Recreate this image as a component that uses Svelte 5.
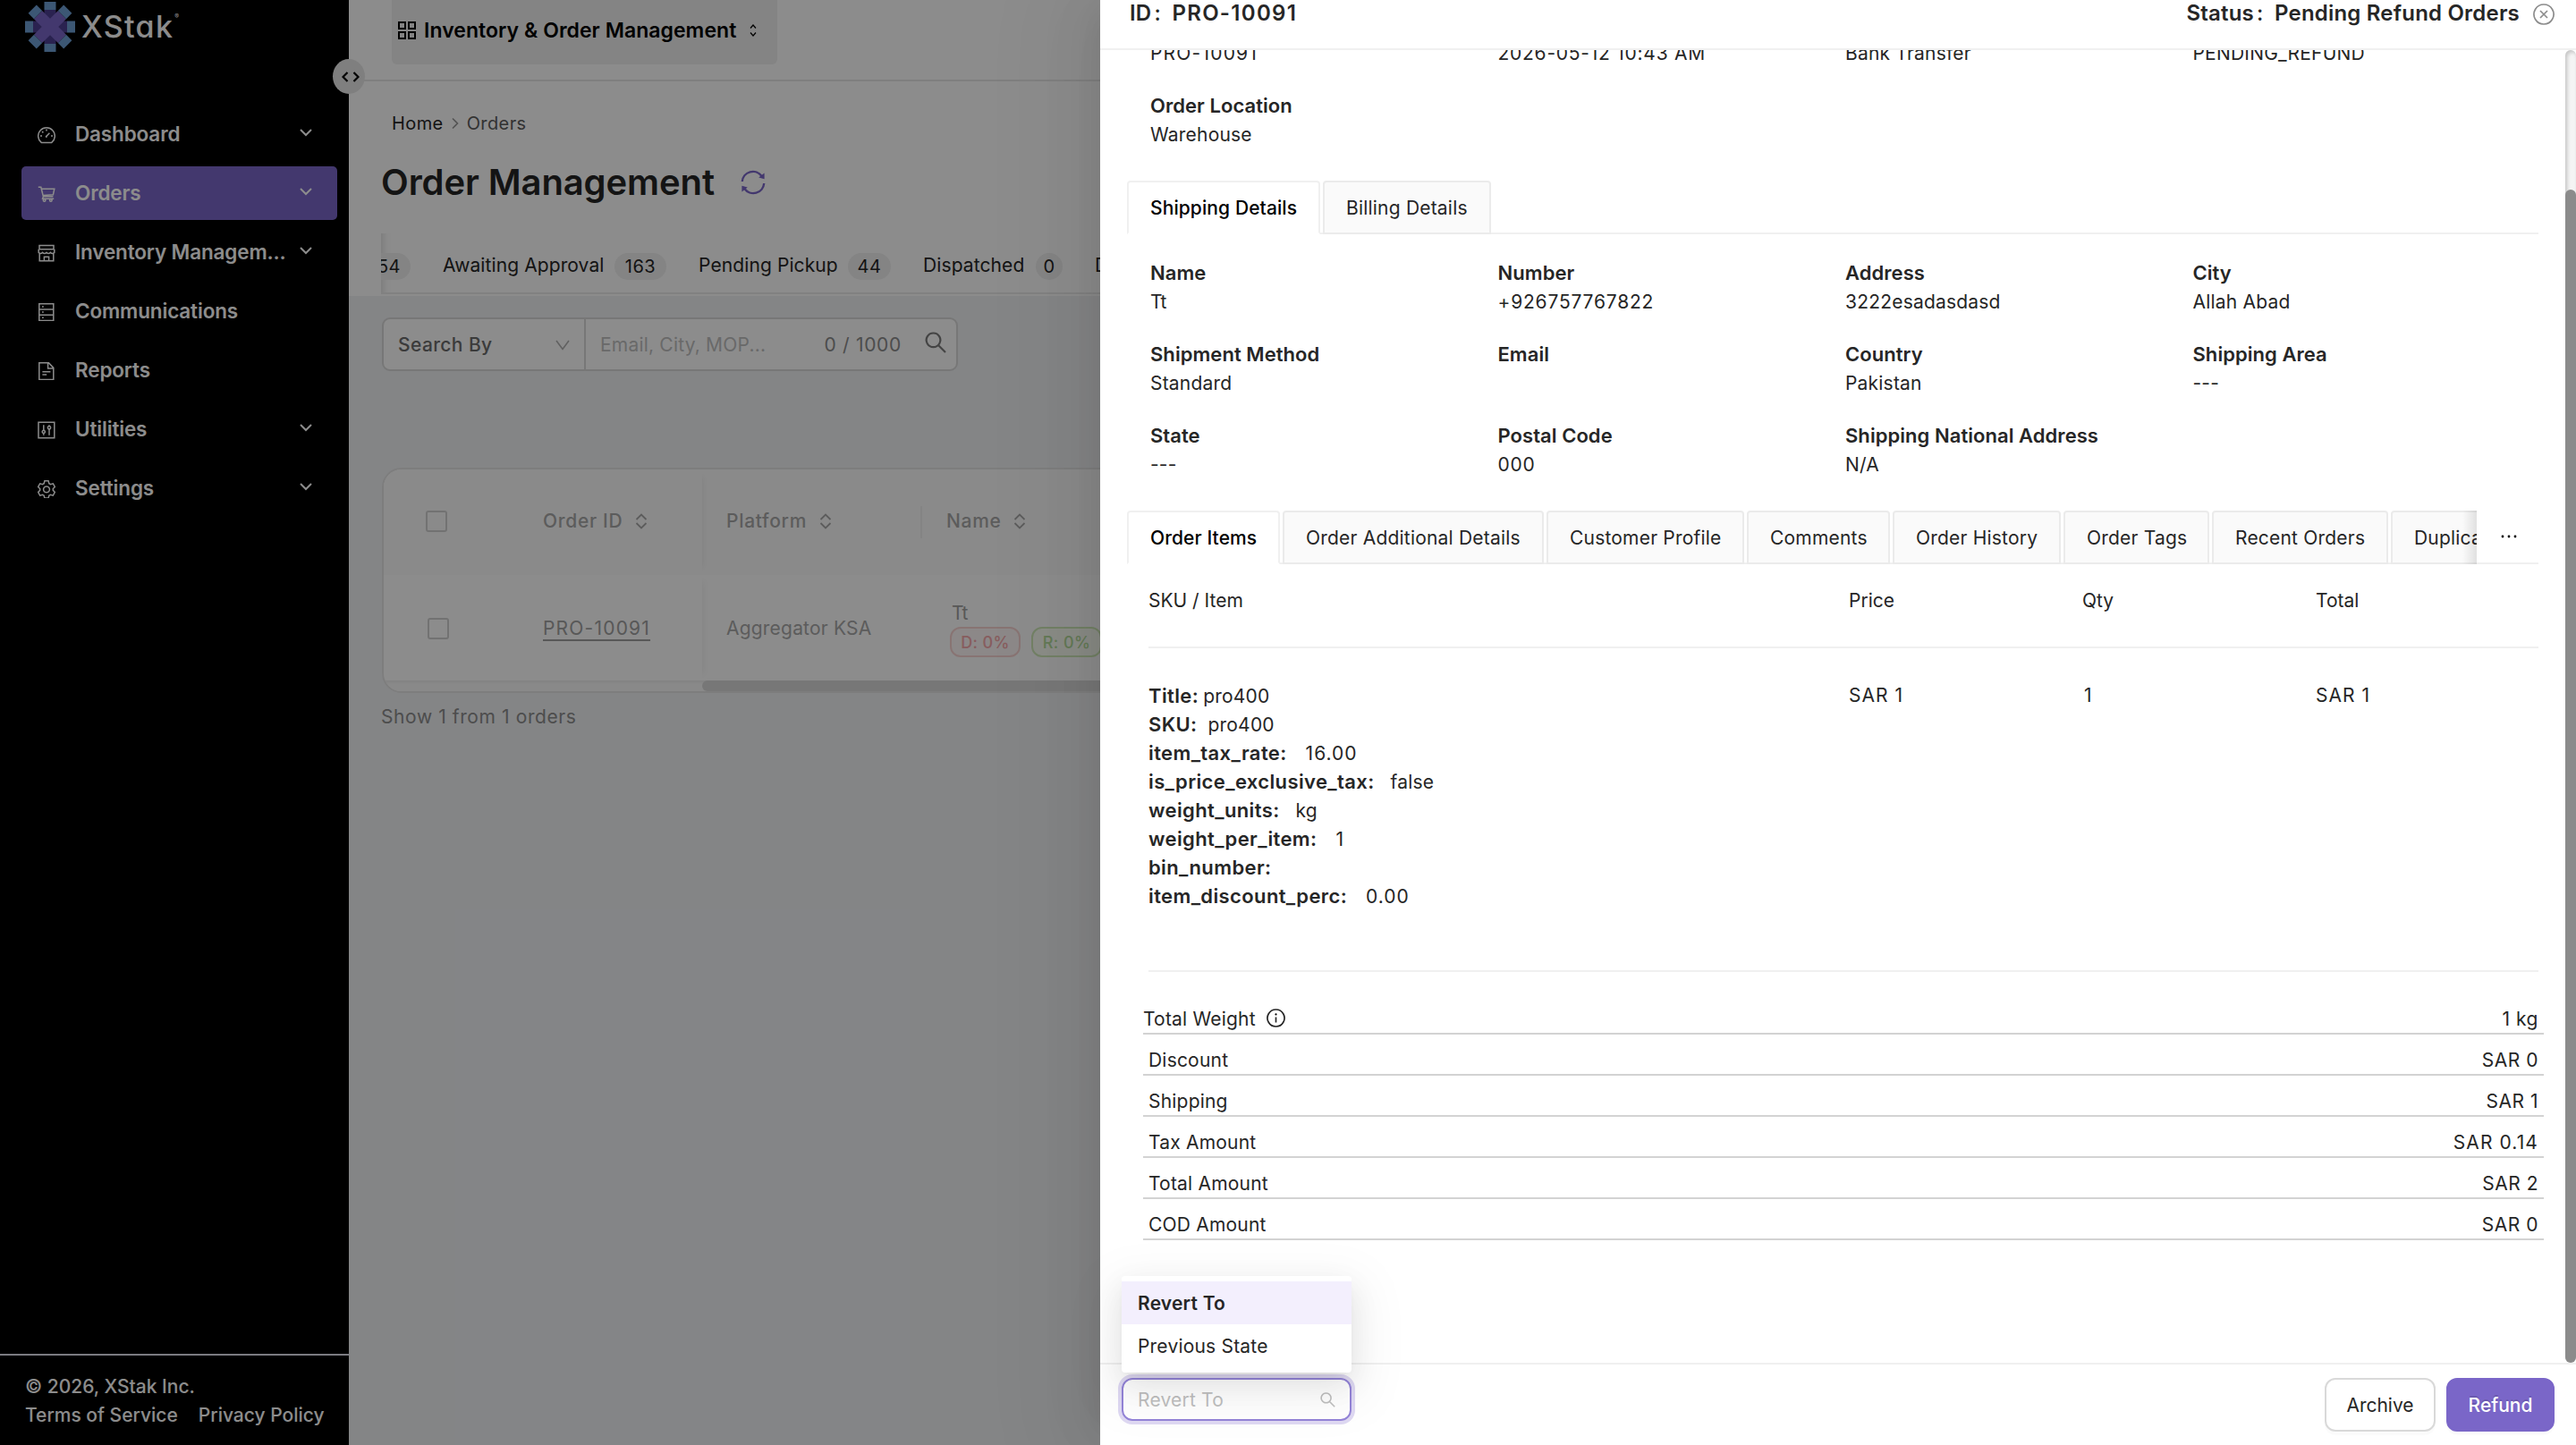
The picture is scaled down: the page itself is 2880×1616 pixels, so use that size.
<script>
  // sidebar entries
  const menu = [
    { label: 'Dashboard', icon: 'gauge', sub: true },
    { label: 'Orders', icon: 'cart', sub: true, active: true },
    { label: 'Inventory Managem...', icon: 'shop', sub: true },
    { label: 'Communications', icon: 'server' },
    { label: 'Reports', icon: 'file' },
    { label: 'Utilities', icon: 'sliders', sub: true },
    { label: 'Settings', icon: 'gear', sub: true },
  ]

  // all drawn in a 20x20 box
  const icons = {
    gauge: 'M4.2 18.4 A9.3 9.3 0 1 1 15.8 18.4 Z M10 3.6v2 M3 11h2 M15 11h2 M5 6l1.4 1.4 M9.6 11.6l3.8-3.8 M9 11.2l1.4 1.4',
    cart: 'M.8 2.2h3l2.6 10.6h11 M4.4 4.2h14.4l-1.4 6.6-11.2.8 M6.4 12.8l-.8 2.4h12.6 M7.6 15.6a1.3 1.3 0 1 0 .01 0 M14.8 15.6a1.3 1.3 0 1 0 .01 0',
    shop: 'M2 1.4h16v4.4H2z M1.2 5.8v3.6q2.2 2.2 4.4 0q2.2 2.2 4.4 0q2.2 2.2 4.4 0q2.2 2.2 4.4 0v-3.6 M2.2 10.4v8.4h15.6v-8.4 M7.4 18.8v-4.6h5.2v4.6',
    server: 'M1.8.8h16v18.6h-16z M1.8 7h16 M1.8 13.2h16 M5 4h1.8 M5 10.1h1.8 M5 16.2h1.8',
    file: 'M1.8.8h10.6l5.4 5.6v13H1.8z M11.6 1v6h6 M5.4 10.8h9 M5.4 14h4.8',
    sliders: 'M1 1.2h17.8v17.6H1z M6.8 4.2v6 M6.8 13.4v2.4 M6.8 10.2a1.6 1.6 0 1 0 .01 0 M13 4.2v1.4 M13 8.8v7 M13 5.6a1.6 1.6 0 1 0 .01 0',
    gear: 'M7.9.8h4.2l.7 2.9 1.7 1 2.8-.9 2.1 3.7-2.1 2v1.9l2.1 2-2.1 3.7-2.8-.9-1.7 1-.7 2.9H7.9l-.7-2.9-1.7-1-2.8.9L.6 13.4l2.1-2V9.5L.6 7.5l2.1-3.7 2.8.9 1.7-1z M10 6.9a3.4 3.4 0 1 0 .01 0z',
  }

  const tabs = [
    { label: 'Awaiting Approval', count: 163, w: 179, badge: 58 },
    { label: 'Pending Pickup', count: 44, w: 154, badge: 48 },
    { label: 'Dispatched', count: 0, w: 113, badge: 30 },
  ]

  const shipping = [
    ['Name', 'Tt'],
    ['Number', '+926757767822', true],
    ['Address', '3222esadasdasd'],
    ['City', 'Allah Abad'],
    ['Shipment Method', 'Standard'],
    ['Email', ''],
    ['Country', 'Pakistan'],
    ['Shipping Area', '---'],
    ['State', '---'],
    ['Postal Code', '000', true],
    ['Shipping National Address', 'N/A'],
  ]

  const detailTabs = [
    { label: 'Order Items', w: 171 },
    { label: 'Order Additional Details', w: 292 },
    { label: 'Customer Profile', w: 221 },
    { label: 'Comments', w: 160 },
    { label: 'Order History', w: 188 },
    { label: 'Order Tags', w: 163 },
    { label: 'Recent Orders', w: 197 },
    { label: 'Duplicate Orders', w: 220 },
  ]

  const attributes = [
    ['item_tax_rate:', '16.00', true],
    ['is_price_exclusive_tax:', 'false'],
    ['weight_units:', 'kg'],
    ['weight_per_item:', '1', true],
    ['bin_number:', ''],
    ['item_discount_perc:', '0.00', true],
  ]

  const totals = [
    ['Discount', 'SAR 0'],
    ['Shipping', 'SAR 1'],
    ['Tax Amount', 'SAR 0.14', true],
    ['Total Amount', 'SAR 2'],
    ['COD Amount', 'SAR 0'],
  ]
</script>

{#snippet sorter()}
  <svg class="sorter" width="14" height="18" viewBox="0 0 14 18"><path d="M1.5 7L7 1.5 12.5 7M1.5 11L7 16.5 12.5 11" /></svg>
{/snippet}

<div class="page">
  <aside class="sidebar">
    <div class="brand">
      <svg width="56" height="56" viewBox="-28 -28 56 56">
        <path fill="#4e3f92" d="M-6.5-19h13v38h-13zM-19-6.5h38v13h-38z" />
        {#each [45, 135] as angle}
          <path fill="#7a66c8" transform="rotate({angle})" d="M-19-6.5h38v13h-38z" />
        {/each}
        {#each [0, 45, 90, 135, 180, 225, 270, 315] as angle}
          <path fill="#6d9ed4" transform="rotate({angle})" d="M-6.5-28h13v9h-13z" />
        {/each}
      </svg>
      <span class="brand-name">XStak</span><span class="reg">®</span>
    </div>

    <nav>
      {#each menu as item}
        <div class="item" class:active={item.active}>
          <svg class="item-icon" width="20" height="20" viewBox="0 0 20 20"><path d={icons[item.icon]} /></svg>
          <span>{item.label}</span>
          {#if item.sub}
            <svg class="chev" width="14" height="9" viewBox="0 0 14 9"><path d="M1 1l6 6 6-6" /></svg>
          {/if}
        </div>
      {/each}
    </nav>

    <footer>
      <div>© 2026, XStak Inc.</div>
      <div class="links"><span>Terms of Service</span><span>Privacy Policy</span></div>
    </footer>
  </aside>

  <div class="toggle">
    <svg width="20" height="12" viewBox="0 0 20 12"><path d="M6.5 1L1.5 6l5 5M13.5 1l5 5-5 5" /></svg>
  </div>

  <main>
    <header class="top">
      <div class="switcher">
        <svg width="20" height="20" viewBox="0 0 20 20"><path d="M1 1h7v7H1zM12 1h7v7h-7zM1 12h7v7H1zM12 12h7v7h-7z" /></svg>
        <span>Inventory &amp; Order Management</span>
        <svg class="updown" width="8" height="14" viewBox="0 0 8 14"><path d="M1 4.5L4 1l3 3.5M1 9.5L4 13l3-3.5" /></svg>
      </div>
    </header>

    <div class="heading">
      <div class="crumbs">
        <span class="home">Home</span>
        <svg width="8" height="14" viewBox="0 0 8 14"><path d="M1 1.5L6.5 7 1 12.5" /></svg>
        <span>Orders</span>
      </div>
      <div class="title">
        <h1>Order Management</h1>
        <svg width="28" height="28" viewBox="0 0 28 28">
          <path fill="none" stroke="#7a66c8" stroke-width="2.4" d="M1.8 13A12 12 0 0 1 23.6 7M26.2 15A12 12 0 0 1 4.4 21" />
          <path fill="#7a66c8" d="M26.6 3.6v6.6l-6.4-1.6zM1.4 24.4v-6.6l6.4 1.6z" />
        </svg>
      </div>
      <div class="tabs">
        <div class="tab first"><span class="badge">54</span></div>
        {#each tabs as tab}
          <div class="tab"><span style="width:{tab.w}px">{tab.label}</span><span class="badge" style="width:{tab.badge}px">{tab.count}</span></div>
        {/each}
        <div class="tab"><span>D</span></div>
      </div>
    </div>

    <div class="content">
      <div class="search">
        <div class="by">
          <span>Search By</span>
          <svg width="16" height="12" viewBox="0 0 16 12"><path d="M1 1l7 9.5L15 1" /></svg>
        </div>
        <div class="field">
          <span class="hint">Email, City, MOP...</span>
          <span class="limit">0 / 1000</span>
          <svg width="24" height="24" viewBox="0 0 24 24"><path d="M9.5 1.5a7.8 7.8 0 1 0 .01 0zM15 15l8 8" /></svg>
        </div>
      </div>

      <div class="table">
        <div class="row head">
          <div class="c-check"><i class="box"></i></div>
          <div class="c-id"><span>Order ID</span>{@render sorter()}</div>
          <div class="c-platform"><span>Platform</span>{@render sorter()}</div>
          <div class="c-name"><span>Name</span>{@render sorter()}</div>
        </div>
        <div class="row first-row">
          <div class="c-check second"><i class="box"></i></div>
          <div class="c-id"><u class="num">PRO-10091</u></div>
          <div class="c-platform">Aggregator KSA</div>
          <div class="c-name cust">
            <span>Tt</span>
            <div class="tags"><em class="red">D: 0%</em><em class="green">R: 0%</em></div>
          </div>
        </div>
        <div class="hscroll"><div class="hthumb"></div></div>
      </div>
      <div class="count">Show 1 from 1 orders</div>
    </div>
  </main>

  <div class="mask"></div>

  <section class="drawer">
    <header class="d-head">
      <span>ID</span><span class="colon">:</span><span class="id">PRO-10091</span>
      <span class="status">Status</span><span class="colon">:</span><span>Pending Refund Orders</span>
      <svg width="24" height="24" viewBox="0 0 24 24"><path d="M12 1a11 11 0 1 0 .01 0zM8 8l8 8M16 8l-8 8" /></svg>
    </header>

    <div class="d-body">
      <div class="scroll">
        <div class="grid summary">
          <span class="num">PRO-10091</span><span class="num date">2026-05-12 10:43 AM</span><span>Bank Transfer</span><span>PENDING_REFUND</span>
        </div>
        <div class="pair location"><b>Order Location</b><span>Warehouse</span></div>

        <div class="cards">
          <div class="card on" style="width:216px">Shipping Details</div>
          <div class="card" style="width:188px">Billing Details</div>
        </div>

        <div class="grid details">
          {#each shipping as [label, value, numeric]}
            <div class="pair"><b>{label}</b><span class:num={numeric}>{value}</span></div>
          {/each}
        </div>

        <div class="cards second">
          <div class="clip">
            {#each detailTabs as tab, i}
              <div class="card" class:on={i === 0} style="width:{tab.w}px">{tab.label}</div>
            {/each}
          </div>
          <svg class="more" width="18" height="4" viewBox="0 0 18 4"><circle cx="2" cy="2" r="1.4" /><circle cx="9" cy="2" r="1.4" /><circle cx="16" cy="2" r="1.4" /></svg>
        </div>

        <div class="items head-row">
          <span>SKU / Item</span><span>Price</span><span>Qty</span><span>Total</span>
        </div>
        <div class="items body-row">
          <div class="attrs">
            <div><b>Title:</b><span class="a-title">pro400</span></div>
            <div><b>SKU:</b><span class="a-sku">pro400</span></div>
            {#each attributes as [key, value, numeric]}
              <div><b>{key}</b><span class:num={numeric}>{value}</span></div>
            {/each}
          </div>
          <span class="sar">SAR 1</span><span class="qty">1</span><span class="sar">SAR 1</span>
        </div>

        <div class="totals">
          <div class="total weight">
            <span>Total Weight</span>
            <svg width="21" height="21" viewBox="0 0 21 21"><path d="M10.5 1a9.5 9.5 0 1 0 .01 0zM10.5 9.4v6" /><circle cx="10.5" cy="6.4" r="1.1" /></svg>
            <span class="amount">1 kg</span>
          </div>
          {#each totals as [label, amount, wide]}
            <div class="total"><span>{label}</span><span class="amount" class:num={wide}>{amount}</span></div>
          {/each}
        </div>
      </div>
      <div class="vscroll"><div class="vthumb"></div></div>
    </div>

    <footer class="d-foot">
      <div class="select">
        <span>Revert To</span>
        <svg width="17" height="17" viewBox="0 0 17 17"><path d="M6.6 1a5.4 5.4 0 1 0 .01 0zM10.5 10.5l5.7 5.7" /></svg>
        <div class="options">
          <div class="option picked">Revert To</div>
          <div class="option">Previous State</div>
        </div>
      </div>
      <button>Archive</button>
      <button class="primary">Refund</button>
    </footer>
  </section>
</div>

<style>
  :global(body) { overflow: hidden; }
  .page {
    position: relative;
    display: flex;
    width: 2880px;
    height: 1616px;
    overflow: hidden;
    background: #f0f2f5;
    font-family: Inter, 'Liberation Sans', sans-serif;
    font-size: 21px;
    letter-spacing: 0.2px;
    line-height: 32px;
    color: #262626;
    white-space: nowrap;
  }
  svg { display: block; flex: none; }
  .num { letter-spacing: 1.2px; }

  /* sidebar */
  .sidebar {
    display: flex;
    flex-direction: column;
    width: 390px;
    flex: none;
    background: #000;
    color: #fff;
  }
  .brand { display: flex; align-items: center; height: 60px; padding-left: 28px; }
  .brand-name {
    margin-left: 7px;
    font-size: 34px;
    font-weight: 500;
    letter-spacing: 1.3px;
    font-feature-settings: 'cv11';
  }
  .reg { margin: -22px 0 0 1px; font-size: 7px; line-height: 8px; }
  nav { display: flex; flex-direction: column; gap: 6px; padding: 60px 13px 0 24px; }
  .item {
    display: flex;
    align-items: center;
    height: 60px;
    padding: 0 28px 0 18px;
    border-radius: 5px;
    font-size: 22.5px;
    font-weight: 600;
    letter-spacing: -0.15px;
  }
  .item span { margin-left: 22px; }
  .active { background: #7a66c8; }
  .item-icon { margin-top: 1px; }
  .item-icon path { fill: none; stroke: #fff; stroke-width: 1.5; }
  .chev { margin: -4px 0 0 auto; }
  .chev path { fill: none; stroke: #fff; stroke-width: 2; }
  .sidebar footer {
    margin-top: auto;
    height: 81px;
    padding: 19px 0 0 28px;
    border-top: 2px solid #e0e0ec;
    font-weight: 500;
    letter-spacing: 0;
  }
  .links { display: flex; gap: 23px; }
  .toggle {
    position: absolute;
    left: 372px;
    top: 66px;
    display: grid;
    place-items: center;
    width: 36px;
    height: 39px;
    padding-left: 3px;
    box-sizing: border-box;
    border-radius: 50%;
    background: #e8e8e8;
  }
  .toggle path { fill: none; stroke: #000; stroke-width: 2.2; }

  /* main column */
  main { flex: 1; display: flex; flex-direction: column; }
  .top {
    height: 89px;
    padding-left: 48px;
    border-bottom: 2px solid #e8e8e8;
    background: #fff;
  }
  .switcher {
    display: flex;
    align-items: center;
    width: 431px;
    height: 72px;
    padding: 0 0 5px 7px;
    box-sizing: border-box;
    border-radius: 0 0 6px 6px;
    background: #f0f0f0;
    color: #000;
    font-size: 23px;
    font-weight: 600;
    letter-spacing: 0.05px;
  }
  .switcher span { margin-left: 9px; width: 349px; }
  .switcher path { fill: none; stroke: #000; stroke-width: 2; }
  .switcher .updown { margin-left: 15px; }
  .switcher .updown path { stroke-width: 1.2; }
  .heading { height: 240px; padding-left: 36px; background: #fff; }
  .crumbs {
    display: flex;
    align-items: center;
    gap: 9px;
    padding: 31px 0 0 12px;
    font-size: 20px;
    letter-spacing: 0.4px;
    color: #5c5c5c;
  }
  .home { color: #262626; }
  .crumbs path { fill: none; stroke: #999; stroke-width: 1.6; }
  .title { display: flex; align-items: center; gap: 29px; height: 50px; margin-top: 25px; }
  h1 { margin: 0; font-size: 40px; font-weight: 600; letter-spacing: -0.1px; color: #262626; }
  .tabs {
    display: flex;
    gap: 36px;
    height: 68px;
    margin-top: 32px;
    padding-top: 5px;
    box-sizing: border-box;
    border-bottom: 2px solid #ececec;
    box-shadow: inset 14px 0 10px -12px rgba(0, 0, 0, 0.14);
    overflow: hidden;
  }
  .tab { display: flex; align-items: center; gap: 13px; flex: none; letter-spacing: 0.1px; }
  .tab.first { width: 33px; justify-content: flex-end; overflow: hidden; }
  .first .badge { width: 48px; }
  .badge {
    flex: none;
    height: 30px;
    margin-top: 2px;
    border-radius: 15px;
    background: #f0f0f0;
    font-size: 20px;
    line-height: 31px;
    letter-spacing: 0.5px;
    text-align: center;
  }

  .content { flex: 1; padding: 24px 0 0 37px; background: #f0f2f5; }
  .search {
    display: flex;
    width: 644px;
    height: 60px;
    padding-top: 1px;
    box-sizing: border-box;
    border: 2px solid #d9d9d9;
    border-radius: 9px;
    background: #fff;
  }
  .by {
    display: flex;
    align-items: center;
    width: 226px;
    margin-top: -1px;
    padding: 1px 16px 0 16px;
    box-sizing: border-box;
    justify-content: space-between;
    border-right: 2px solid #d9d9d9;
    font-weight: 500;
    letter-spacing: 0.4px;
    color: #6c6c6c;
  }
  .by path { fill: none; stroke: #b0b0b0; stroke-width: 1.6; }
  .field { display: flex; align-items: center; flex: 1; padding: 0 11px 0 16px; }
  .hint { color: #bfbfbf; }
  .limit { margin-left: auto; margin-right: 26px; letter-spacing: 0.7px; color: #8c8c8c; }
  .field svg { margin-top: -5px; }
  .field path { fill: none; stroke: #7c7c7c; stroke-width: 2.2; }

  .table {
    width: 1100px;
    height: 252px;
    margin-top: 108px;
    box-sizing: border-box;
    border: 2px solid #e4e4e4;
    border-radius: 22px;
    background: #fff;
    color: #a8a8a8;
    overflow: hidden;
  }
  .row { display: flex; align-items: stretch; height: 118px; }
  .row.head { background: #fcfcfc; font-weight: 500; letter-spacing: 0.7px; }
  .row > div { display: flex; align-items: center; padding-bottom: 2px; }
  .first-row > div { padding-bottom: 0; padding-top: 1px; }
  .c-check { width: 178px; padding-left: 47px; box-sizing: border-box; }
  .c-check.second { padding-left: 49px; }
  .box { width: 24px; height: 24px; box-sizing: border-box; border: 2px solid #d0d0d0; border-radius: 3px; }
  .c-id { width: 178px; box-sizing: border-box; box-shadow: 8px 0 8px -8px rgba(0, 0, 0, 0.08); gap: 14px; }
  .c-platform { width: 244px; margin-left: 27px; gap: 14px; }
  .head .c-platform { background: linear-gradient(#f0f0f0, #f0f0f0) 217px 50% / 2px 36px no-repeat; }
  .c-name { gap: 13px; }
  .head .c-name { padding-left: 2px; }
  .sorter path { fill: none; stroke: #a8a8a8; stroke-width: 1.8; }
  u { text-decoration-thickness: 2px; text-underline-offset: 5px; letter-spacing: 1.4px; color: #a0a0a0; }
  .row > .cust { flex-direction: column; align-items: flex-start; justify-content: flex-start; gap: 0; padding: 27px 0 0 8px; color: #a0a0a0; }
  .tags { display: flex; gap: 12px; margin: -1px 0 0 -2px; }
  em {
    width: 79px;
    height: 34px;
    box-sizing: border-box;
    border: 2px solid;
    border-radius: 12px;
    font-size: 18px;
    font-style: normal;
    font-weight: 500;
    line-height: 31px;
    letter-spacing: 0.4px;
    text-align: center;
  }
  .red { border-color: #f8d4d2; color: #f6a9ac; background: #fff8f7; }
  .green { border-color: #cfeab8; color: #b4dc9c; background: #fbfff5; }
  .hscroll { height: 12px; padding-left: 356px; border-radius: 0 0 0 12px; box-shadow: inset 0 2px 4px rgba(0, 0, 0, 0.06); background: #fafafa; }
  .hthumb { height: 12px; border-radius: 6px; background: #d9d9d9; }
  .count { margin: 11px 0 0 -1px; letter-spacing: 0.6px; color: #8c8c8c; }

  .mask { position: absolute; inset: 0; background: rgba(0, 0, 0, 0.45); }

  /* order drawer */
  .drawer {
    position: absolute;
    top: 0;
    right: 0;
    display: flex;
    flex-direction: column;
    width: 1650px;
    height: 1616px;
    background: #fff;
    box-shadow: -12px 0 32px -16px rgba(0, 0, 0, 0.08), -18px 0 56px rgba(0, 0, 0, 0.05), -24px 0 96px 32px rgba(0, 0, 0, 0.03);
  }
  .d-head {
    display: flex;
    align-items: center;
    height: 56px;
    padding: 0 24px 24px 33px;
    box-sizing: border-box;
    border-bottom: 2px solid #f0f0f0;
    font-size: 24px;
    font-weight: 600;
    letter-spacing: 0.2px;
  }
  .colon { width: 7px; margin: 0 13px 0 3px; font-weight: 500; }
  .id { letter-spacing: 1.3px; }
  .status { margin-left: auto; }
  .d-head svg { margin-left: 15px; margin-top: 2px; }
  .d-head path { fill: none; stroke: #8c8c8c; stroke-width: 1.7; }
  .d-body { display: flex; flex: 1; min-height: 0; }
  .scroll { flex: 1; padding: 0 30px; overflow: hidden; }
  .grid { display: grid; grid-template-columns: repeat(4, 388.5px); padding-left: 26px; }
  .summary { margin-top: -12px; }
  .summary .num:first-child { letter-spacing: 1.2px; }
  .summary .date { letter-spacing: 0.75px; }
  .pair { display: flex; flex-direction: column; gap: 1px; }
  .pair b { font-size: 22px; font-weight: 600; letter-spacing: 0.05px; }
  .pair .num { letter-spacing: 0.8px; }
  .location { padding: 26px 0 0 26px; }
  .cards { display: flex; gap: 3px; width: 1578px; height: 60px; margin-top: 35px; box-shadow: inset 0 -2px #f0f0f0; }
  .card {
    flex: none;
    height: 60px;
    padding-left: 24px;
    box-sizing: border-box;
    border: 2px solid #ebebeb;
    border-radius: 4px 4px 0 0;
    background: #fafafa;
    line-height: 58px;
  }
  .card.on { border-color: #f0f0f0; border-bottom-color: #fff; background: #fff; color: #000; font-weight: 500; letter-spacing: 0.1px; }
  .details { margin-top: 27px; row-gap: 26px; }
  .clip {
    position: relative;
    display: flex;
    gap: 3px;
    width: 1509px;
    overflow: hidden;
  }
  /* fade at the clipped end of the tab strip */
  .clip::after {
    content: '';
    position: absolute;
    right: 0;
    top: 0;
    width: 16px;
    height: 60px;
    background: linear-gradient(to right, transparent, rgba(0, 0, 0, 0.1));
  }
  .more { margin: 27px 0 0 24px; }
  .items {
    display: grid;
    grid-template-columns: 783px 261px 261px 249px;
    margin-left: 24px;
    width: 1554px;
    box-sizing: border-box;
    border-bottom: 2px solid #f0f0f0;
  }
  .head-row { height: 94px; padding-top: 25px; letter-spacing: 0; }
  .body-row { height: 362px; padding-top: 37px; align-items: start; }
  .attrs div { display: flex; align-items: baseline; height: 32px; }
  .attrs b { font-size: 22px; font-weight: 600; letter-spacing: 0.38px; }
  .attrs span { margin-left: 18px; }
  .attrs .num { margin-left: 21px; letter-spacing: 1px; }
  .attrs .a-title { margin-left: 5px; }
  .attrs .a-sku { margin-left: 12px; }
  .sar { letter-spacing: 1px; }
  .qty { padding-left: 2px; }
  .totals { width: 1566px; margin: 24px 0 0 18px; }
  .total {
    display: flex;
    align-items: center;
    height: 46px;
    padding: 14px 6px 0 6px;
    box-sizing: border-box;
    border-bottom: 2px solid #d3d3d3;
  }
  .total.weight { padding-left: 0; }
  .total svg { margin: 0 0 3px 12px; }
  .total path { fill: none; stroke: #262626; stroke-width: 1.7; }
  .amount { margin-left: auto; letter-spacing: 0.5px; }
  .amount.num { letter-spacing: 1.1px; }
  .vscroll { width: 12px; padding-top: 156px; box-sizing: border-box; border-radius: 6px; background: #f4f4f4; box-shadow: inset 2px 2px 4px rgba(0, 0, 0, 0.2); }
  .vthumb { height: 100%; border-radius: 6px; background: #8b8b8b; }
  .d-foot {
    display: flex;
    align-items: center;
    gap: 12px;
    height: 92px;
    padding: 0 24px;
    box-sizing: border-box;
    border-top: 2px solid #f0f0f0;
  }
  .select {
    position: relative;
    display: flex;
    align-items: center;
    justify-content: space-between;
    width: 257px;
    height: 48px;
    margin: 0 auto 12px 0;
    padding: 1px 16px 0 16px;
    box-sizing: border-box;
    border: 2px solid #9484d8;
    border-radius: 12px;
    box-shadow: 0 0 0 4px #dfd9f3;
    color: #bfbfbf;
  }
  .select path { fill: none; stroke: #bfbfbf; stroke-width: 1.6; }
  .options {
    position: absolute;
    left: -2px;
    bottom: 52px;
    width: 257px;
    height: 108px;
    padding-top: 6px;
    box-sizing: border-box;
    border-radius: 4px;
    background: #fff;
    color: #262626;
    box-shadow: 0 6px 12px -8px rgba(0, 0, 0, 0.12), 0 12px 32px rgba(0, 0, 0, 0.08), 0 18px 56px 16px rgba(0, 0, 0, 0.05);
  }
  .option { height: 48px; padding-left: 18px; line-height: 49px; }
  .picked { background: #f3effd; font-weight: 600; }
  button {
    width: 124px;
    height: 60px;
    padding: 1px 0 0;
    border: 2px solid #d9d9d9;
    border-radius: 12px;
    background: #fff;
    color: #262626;
    font: inherit;
    letter-spacing: 0;
    box-shadow: 0 4px 0 rgba(0, 0, 0, 0.015);
  }
  .primary { width: 121px; border-color: #7a66c8; background: #7a66c8; color: #fff; font-weight: 500; text-shadow: 0 -2px 0 rgba(0, 0, 0, 0.12); }
</style>
